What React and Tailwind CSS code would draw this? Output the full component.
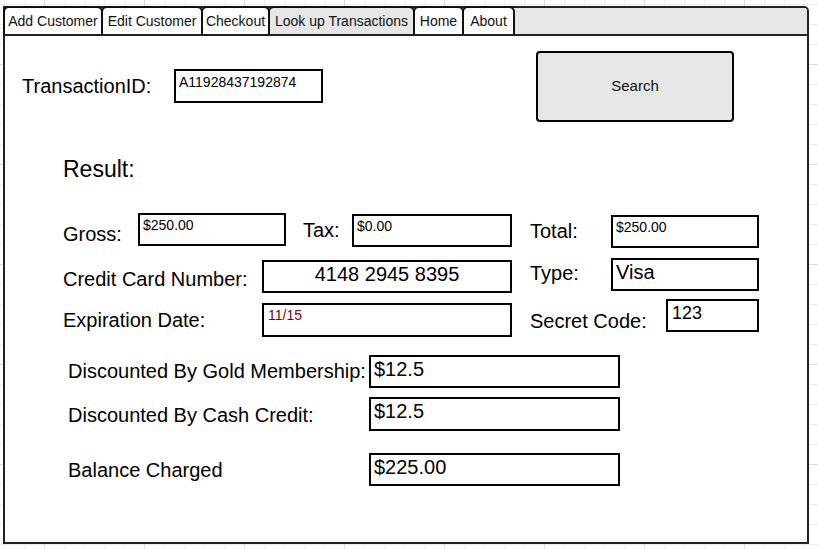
import React from 'react';

const tabs = [
    { label: 'Add Customer', w: 'w-[100px]', first: true },
    { label: 'Edit Customer', w: 'w-[102px]' },
    { label: 'Checkout', w: 'w-[69px]' },
    { label: 'Look up Transactions', w: 'w-[147px]', active: true },
    { label: 'Home', w: 'w-[51px]' },
    { label: 'About', w: 'w-[53px]' },
];

function Field({ className, children }) {
    return (
        <div className={`border-2 border-black bg-white leading-none whitespace-nowrap text-black ${className}`}>
            {children}
        </div>
    );
}

function Label({ className, children }) {
    return (
        <div className={`text-[20px] leading-none whitespace-nowrap text-black ${className}`}>
            {children}
        </div>
    );
}

export default function App() {
    return (
        <div
            className="w-[818px] h-[549px] pl-[3px] pt-[6px] bg-white font-['Liberation_Sans',Arial,sans-serif] [background-image:linear-gradient(to_right,#dcdcdc_1px,transparent_1px),linear-gradient(to_bottom,#dcdcdc_1px,transparent_1px),linear-gradient(to_right,#ececec_1px,transparent_1px),linear-gradient(to_bottom,#ececec_1px,transparent_1px)] [background-size:100px_100px,100px_100px,20px_20px,20px_20px] [background-position:44px_64px,44px_64px,4px_4px,4px_4px]"
        >
            {/* Frame */}
            <div className="w-[806px] h-[538px] border-2 border-[#222] rounded-tr-[5px] bg-white flex flex-col">
                {/* Tab strip */}
                <div className="h-[28px] shrink-0 bg-[#e6e6e6] border-b-2 border-[#222] rounded-tr-[3px] flex">
                    <div className="flex h-[28px] -mt-[2px] -ml-[2px]">
                        {tabs.map((t) => (
                            <div
                                key={t.label}
                                className={`${t.w} ${t.first ? '' : '-ml-[2px]'} ${t.active ? 'bg-[#e6e6e6]' : 'bg-white'} h-full border-t-2 border-x-2 border-[#111] rounded-t-[6px] flex items-center justify-center text-[14px] text-[#111] whitespace-nowrap`}
                            >
                                {t.label}
                            </div>
                        ))}
                    </div>
                </div>

                {/* Content */}
                <div className="flex-1 flex flex-col">
                    {/* Transaction lookup */}
                    <div className="flex items-start mt-[15px]">
                        <Label className="ml-[17px] w-[152px] mt-[25px]">TransactionID:</Label>
                        <Field className="w-[149px] h-[34px] mt-[18px] pl-[3px] pt-[4px] text-[14px]">A11928437192874</Field>
                        <div className="ml-[213px] w-[198px] h-[71px] border-2 border-black rounded-[4px] bg-[#e6e6e6] flex items-center justify-center text-[15px] text-[#111]">
                            Search
                        </div>
                    </div>

                    <div className="mt-[36px] ml-[58px] text-[23px] leading-none text-black">Result:</div>

                    {/* Gross / Tax / Total */}
                    <div className="flex items-start h-[35px] mt-[32px]">
                        <Label className="ml-[58px] w-[75px] mt-[11px]">Gross:</Label>
                        <Field className="w-[148px] h-[33px] pl-[3px] pt-[3px] text-[14px]">$250.00</Field>
                        <Label className="w-[66px] pl-[17px] mt-[7px]">Tax:</Label>
                        <Field className="w-[160px] h-[33px] mt-[1px] pl-[3px] pt-[3px] text-[14px]">$0.00</Field>
                        <Label className="w-[99px] pl-[18px] mt-[8px]">Total:</Label>
                        <Field className="w-[148px] h-[33px] mt-[2px] pl-[3px] pt-[3px] text-[14px]">$250.00</Field>
                    </div>

                    {/* Card number / Type */}
                    <div className="flex items-start h-[35px] mt-[10px]">
                        <Label className="ml-[58px] w-[199px] mt-[11px]">Credit Card Number:</Label>
                        <Field className="w-[250px] h-[33px] mt-[2px] pt-[2px] text-[20px] text-center">4148 2945 8395</Field>
                        <Label className="w-[99px] pl-[18px] mt-[5px]">Type:</Label>
                        <Field className="w-[148px] h-[33px] pl-[3px] pt-[2px] text-[20px]">Visa</Field>
                    </div>

                    {/* Expiration / Secret code */}
                    <div className="flex items-start h-[38px] mt-[6px]">
                        <Label className="ml-[58px] w-[199px] mt-[11px]">Expiration Date:</Label>
                        <Field className="w-[250px] h-[34px] mt-[4px] pl-[4px] pt-[3px] text-[14px] !text-[#8b0000]">11/15</Field>
                        <Label className="w-[154px] pl-[18px] mt-[12px]">Secret Code:</Label>
                        <Field className="w-[93px] h-[33px] pl-[4px] pt-[3px] text-[18px]">123</Field>
                    </div>

                    {/* Discounts */}
                    <div className="flex items-start h-[33px] mt-[18px]">
                        <Label className="ml-[63px] w-[301px] mt-[6px]">Discounted By Gold Membership:</Label>
                        <Field className="w-[251px] h-[33px] pl-[3px] pt-[2px] text-[20px]">$12.5</Field>
                    </div>
                    <div className="flex items-start h-[34px] mt-[9px]">
                        <Label className="ml-[63px] w-[301px] mt-[8px]">Discounted By Cash Credit:</Label>
                        <Field className="w-[251px] h-[34px] pl-[3px] pt-[2px] text-[20px]">$12.5</Field>
                    </div>
                    <div className="flex items-start h-[33px] mt-[22px]">
                        <Label className="ml-[63px] w-[301px] mt-[7px]">Balance Charged</Label>
                        <Field className="w-[251px] h-[33px] pl-[3px] pt-[2px] text-[20px]">$225.00</Field>
                    </div>
                </div>
            </div>
        </div>
    );
}
